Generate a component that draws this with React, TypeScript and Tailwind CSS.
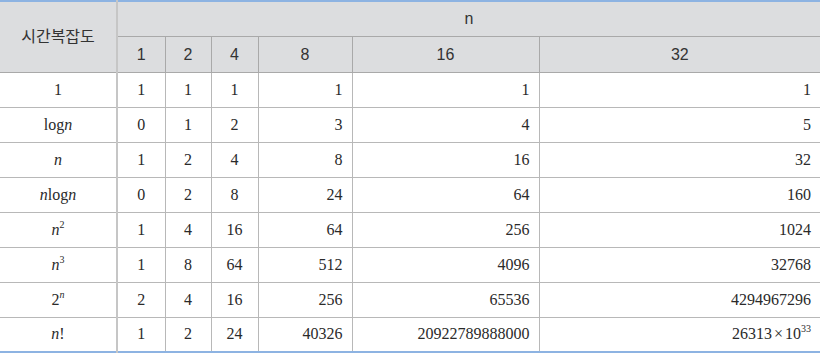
const widths = [117, 48, 46, 47, 94, 187, 281];

type Row = { label: React.ReactNode; values: React.ReactNode[] };

const N = () => <i>n</i>;
const Sup = ({ children, italic }: { children: React.ReactNode; italic?: boolean }) => (
  <sup className={`text-[10px] -top-[7px] ${italic ? "italic" : ""}`}>{children}</sup>
);

const rows: Row[] = [
  { label: "1", values: ["1", "1", "1", "1", "1", "1"] },
  {
    label: (
      <>
        log
        <N />
      </>
    ),
    values: ["0", "1", "2", "3", "4", "5"],
  },
  { label: <N />, values: ["1", "2", "4", "8", "16", "32"] },
  {
    label: (
      <>
        <N />
        log
        <N />
      </>
    ),
    values: ["0", "2", "8", "24", "64", "160"],
  },
  {
    label: (
      <>
        <N />
        <Sup>2</Sup>
      </>
    ),
    values: ["1", "4", "16", "64", "256", "1024"],
  },
  {
    label: (
      <>
        <N />
        <Sup>3</Sup>
      </>
    ),
    values: ["1", "8", "64", "512", "4096", "32768"],
  },
  {
    label: (
      <>
        2<Sup italic>n</Sup>
      </>
    ),
    values: ["2", "4", "16", "256", "65536", "4294967296"],
  },
  {
    label: (
      <>
        <N />!
      </>
    ),
    values: [
      "1",
      "2",
      "24",
      "40326",
      "20922789888000",
      <>
        26313<span className="mx-[2px]">×</span>10<Sup>33</Sup>
      </>,
    ],
  },
];

const headCell =
  "border border-[#a9a9a9] text-[#333] font-normal text-[16px] align-middle [font-family:'Liberation_Sans','Noto_Sans_CJK_KR',sans-serif]";
const bodyCell =
  "border border-[#b8b8b8] text-[16px] text-[#2a2a2a] [font-family:'Liberation_Serif',serif]";

export default function App() {
  return (
    <div className="w-[823px] h-[356px] bg-white">
      <table className="table-fixed border-collapse w-[820px] border-t-2 border-t-[#8db3e2] border-b-2 border-b-[#8db3e2]">
        <colgroup>
          {widths.map((w, i) => (
            <col key={i} style={{ width: w }} />
          ))}
        </colgroup>
        <thead className="bg-[#dcdddf]">
          <tr className="h-[35px]">
            <th
              rowSpan={2}
              className={`${headCell} border-l-0 border-t-0 border-r-2 border-r-[#c6c6c6]`}
            >
              시간복잡도
            </th>
            <th colSpan={6} className={`${headCell} border-t-0 border-r-0`}>
              n
            </th>
          </tr>
          <tr className="h-[36px]">
            {["1", "2", "4", "8", "16", "32"].map((h, i) => (
              <th key={h} className={`${headCell} ${i === 5 ? "border-r-0" : ""} pt-[2px]`}>
                {h}
              </th>
            ))}
          </tr>
        </thead>
        <tbody>
          {rows.map((r, ri) => (
            <tr key={ri} className="h-[35px]">
              <td className={`${bodyCell} border-l-0 border-r-2 border-r-[#c6c6c6] text-center`}>
                {r.label}
              </td>
              {r.values.map((v, i) => (
                <td
                  key={i}
                  className={`${bodyCell} ${i === 5 ? "border-r-0" : ""} ${
                    i < 3 ? "text-center" : "text-right pr-[9px]"
                  }`}
                >
                  {v}
                </td>
              ))}
            </tr>
          ))}
        </tbody>
      </table>
    </div>
  );
}
